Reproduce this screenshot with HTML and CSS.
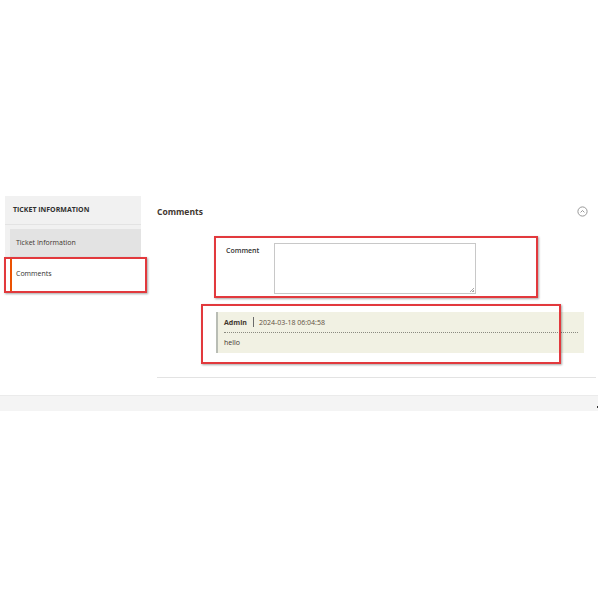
FILE: index.html
```html
<!DOCTYPE html>
<html>
<head>
<meta charset="utf-8">
<link rel="stylesheet" href="styles.css">
</head>
<body>
<div class="page">
  <div class="layout">
    <aside class="sidebar">
      <div class="side-title">TICKET INFORMATION</div>
      <ul class="side-items">
        <li class="side-item">Ticket Information</li>
        <li class="side-item active">Comments</li>
      </ul>
    </aside>
    <main class="main">
      <div class="section-head">
        <span class="section-title">Comments</span>
        <svg class="collapse" width="11" height="11" viewBox="0 0 11 11">
          <circle cx="5.5" cy="5.5" r="4.6" fill="none" stroke="#8c8c8c" stroke-width="0.9"/>
          <path d="M3.6 6.4 L5.5 4.5 L7.4 6.4" fill="none" stroke="#8c8c8c" stroke-width="0.9"/>
        </svg>
      </div>
      <div class="form-row">
        <label class="form-label">Comment</label>
        <div class="textarea"><span class="grip"></span></div>
      </div>
      <div class="comment">
        <div class="comment-head">
          <span class="author">Admin</span>
          <span class="sep"></span>
          <span class="date">2024-03-18 06:04:58</span>
        </div>
        <div class="comment-body">hello</div>
      </div>
      <div class="rule"></div>
    </main>
  </div>
  <div class="footer-bar"></div>
  <span class="dot"></span>
  <div class="mark mark-1"></div>
  <div class="mark mark-2"></div>
  <div class="mark mark-3"></div>
</div>
</body>
</html>
```
FILE: styles.css
```css
html, body {
  margin: 0;
  padding: 0;
  background: #fff;
}
body {
  font-family: "Open Sans", "Liberation Sans", sans-serif;
  color: #303030;
}
.page {
  position: relative;
  padding-top: 196px;
  height: 404px;
}
.layout {
  display: flex;
  align-items: flex-start;
}
.sidebar {
  margin-left: 5px;
  width: 136px;
}
.side-title {
  background: #f1f1f1;
  height: 28px;
  line-height: 28px;
  padding-left: 8px;
  font-size: 7px;
  font-weight: 700;
  color: #303030;
  border-bottom: 1px solid #e3e3e3;
}
.side-items {
  list-style: none;
  margin: 0;
  padding: 4px 0 0 5px;
  background: linear-gradient(#f1f1f1, #f1f1f1) no-repeat 0 0 / 100% 32px;
}
.side-item {
  height: 28px;
  line-height: 28px;
  padding-left: 6px;
  font-size: 7px;
  color: #41362f;
  background: #e3e3e3;
}
.side-item.active {
  margin-top: 1px;
  height: 33px;
  line-height: 31px;
  background: #fff;
  border-left: 2px solid #eb5202;
  padding-left: 4px;
  color: #303030;
}
.main {
  margin-left: 16px;
  width: 439px;
}
.section-head {
  height: 31px;
  display: flex;
  align-items: center;
  justify-content: space-between;
  padding-right: 8px;
}
.section-title {
  font-size: 8.5px;
  font-weight: 700;
  color: #41362f;
}
.collapse {
  display: block;
}
.form-row {
  display: flex;
  margin-top: 16px;
  padding-left: 69px;
}
.form-label {
  width: 48px;
  font-size: 7px;
  font-weight: 600;
  color: #303030;
  padding-top: 3px;
}
.textarea {
  position: relative;
  width: 200px;
  height: 49px;
  border: 1px solid #c8c8c8;
  background: #fff;
}
.grip {
  position: absolute;
  right: 1px;
  bottom: 1px;
  width: 4px;
  height: 4px;
  background: linear-gradient(135deg, transparent 45%, #aaa 45%, #aaa 55%, transparent 55%, transparent 75%, #aaa 75%);
}
.comment {
  margin-top: 18px;
  margin-left: 59px;
  width: 368px;
  height: 41px;
  background: #f1f1e3;
  border-left: 2px solid #b9bdb5;
  padding: 0 6px 0 6px;
  box-sizing: border-box;
}
.comment-head {
  display: flex;
  align-items: center;
  height: 20px;
  font-size: 7px;
  border-bottom: 1px dotted #8a8a80;
}
.author {
  font-weight: 700;
  color: #41362f;
}
.sep {
  width: 1px;
  height: 10px;
  background: #6a6a6a;
  margin: 0 5px 0 6px;
}
.date {
  color: #5e5040;
}
.comment-body {
  font-size: 7px;
  color: #41362f;
  height: 20px;
  line-height: 20px;
}
.rule {
  margin-top: 24px;
  height: 1px;
  background: #e3e3e3;
}
.footer-bar {
  margin-top: 17px;
  width: 598px;
  height: 15px;
  background: #f4f4f4;
  border-top: 1px solid #ebebeb;
}
.dot {
  position: absolute;
  left: 597px;
  top: 406px;
  width: 1px;
  height: 2px;
  background: #333;
}
.mark {
  position: absolute;
  border: 2px solid #e2393d;
  box-shadow: 1px 1px 2px rgba(0, 0, 0, 0.35);
  box-sizing: border-box;
}
.mark-1 {
  left: 4px;
  top: 257px;
  width: 143px;
  height: 36px;
}
.mark-2 {
  left: 214px;
  top: 236px;
  width: 324px;
  height: 62px;
}
.mark-3 {
  left: 201px;
  top: 304px;
  width: 360px;
  height: 60px;
}
```
